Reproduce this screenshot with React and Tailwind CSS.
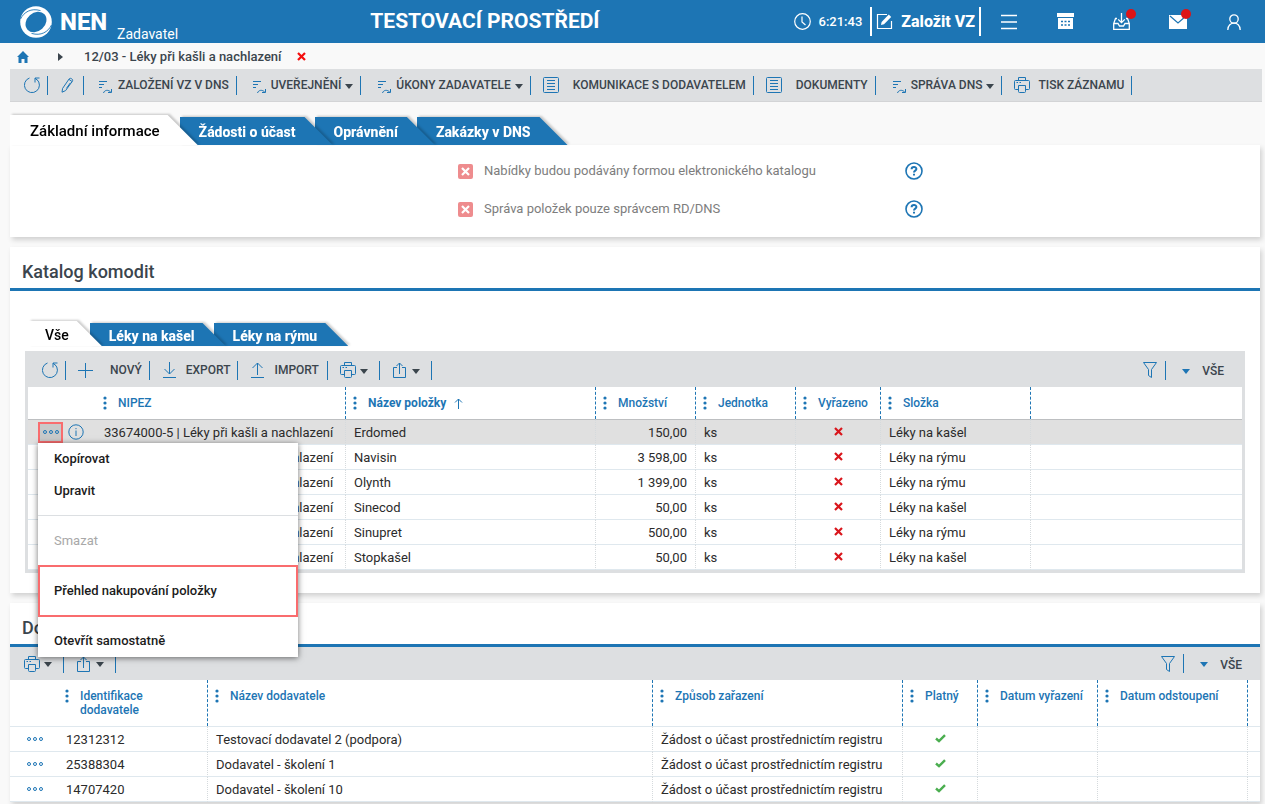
import clsx from "clsx"

const BLUE = "#1d75b4"

const COMMODITIES = [
  { name: "Erdomed", amount: "150,00", folder: "Léky na kašel" },
  { name: "Navisin", amount: "3 598,00", folder: "Léky na rýmu" },
  { name: "Olynth", amount: "1 399,00", folder: "Léky na rýmu" },
  { name: "Sinecod", amount: "50,00", folder: "Léky na kašel" },
  { name: "Sinupret", amount: "500,00", folder: "Léky na rýmu" },
  { name: "Stopkašel", amount: "50,00", folder: "Léky na kašel" },
]

const SUPPLIERS = [
  { id: "12312312", name: "Testovací dodavatel 2 (podpora)" },
  { id: "25388304", name: "Dodavatel - školení 1" },
  { id: "14707420", name: "Dodavatel - školení 10" },
]

/* ---------- icons ---------- */

function Icon({ w = 16, h = 16, color = BLUE, children, className }) {
  return (
    <svg width={w} height={h} viewBox={`0 0 ${w} ${h}`} fill="none" stroke={color} className={clsx("shrink-0", className)} aria-hidden="true">
      {children}
    </svg>
  )
}

const RefreshIcon = () => (
  <Icon>
    <path d="M5.5 1A7.5 7.5 0 1 0 12.8 2.4" />
    <path d="M15.5 1H11V5.5" />
    <path d="M11 1.2 13.2 3" />
  </Icon>
)

const PencilIcon = () => (
  <Icon w={13}>
    <path d="M1 15.2 1.6 11.4 8.2 1.8C9.2 .4 12.6 2.2 11.4 4.2L4.6 13.6Z" />
    <path d="M8 2.4 11.2 4.6M9.4 5.8 5.4 11.4" />
  </Icon>
)

const ProcessIcon = () => (
  <Icon w={15} h={14} className="mt-1">
    <path d="M1 1.5H9M1 4.5H6M1 7.5H4" />
    <path d="M5.5 13C6.5 9.8 10.5 9.4 12.8 12.2M13.5 9V12.5H10" />
  </Icon>
)

const ListIcon = () => (
  <Icon>
    <rect x=".5" y=".5" width="15" height="15" rx="1" />
    <path d="M4 3.5H12M4 6.5H12M4 9.5H12M4 12.5H12" />
  </Icon>
)

const PrinterIcon = () => (
  <Icon>
    <path d="M4.5 3.5V.5H11.5V3.5M4.5 12.5H1.5Q.5 12.5 .5 11.5V4.5Q.5 3.5 1.5 3.5H14.5Q15.5 3.5 15.5 4.5V11.5Q15.5 12.5 14.5 12.5H11.5" />
    <path d="M4.5 8.5H11.5V14.5Q11.5 15.5 10.5 15.5H5.5Q4.5 15.5 4.5 14.5Z" />
    <path d="M2.5 5.5H4M5.5 5.5H7" />
  </Icon>
)

const PlusIcon = () => (
  <Icon w={15}>
    <path d="M7.5 1V16M0 8.5H15" />
  </Icon>
)

const DownloadIcon = () => (
  <Icon w={13}>
    <path d="M6.5 0V12M1.5 7 6.5 12 11.5 7M0 15.5H13" />
  </Icon>
)

const UploadIcon = () => (
  <Icon w={13}>
    <path d="M6.5 13V1M1.5 6 6.5 1 11.5 6M0 15.5H13" />
  </Icon>
)

const ShareIcon = () => (
  <Icon w={13}>
    <path d="M4 5.5H.5V15.5H12.5V5.5H9M6.5 12V1M3.5 4 6.5 1 9.5 4" />
  </Icon>
)

const FilterIcon = () => (
  <Icon w={14}>
    <path d="M.5 .5H13.5L8.5 7.5V15.5L5.5 13.5V7.5Z" />
  </Icon>
)

const Caret = ({ color = "#3b454d" }) => (
  <Icon w={8} h={5} color="none" className="mt-0.5">
    <path d="M0 0H8L4 5Z" fill={color} />
  </Icon>
)

const DotsIcon = () => (
  <Icon w={16} h={4}>
    <circle cx="2" cy="2" r="1.5" />
    <circle cx="8" cy="2" r="1.5" />
    <circle cx="14" cy="2" r="1.5" />
  </Icon>
)

const InfoIcon = () => (
  <Icon>
    <circle cx="8" cy="8" r="7.2" />
    <path d="M8 6.5V12M8 4V5.2" />
  </Icon>
)

const CrossIcon = ({ color = "#d9161c", size = 9 }) => (
  <svg width={size} height={size} viewBox="0 0 9 9" stroke={color} strokeWidth="2.2" aria-hidden="true">
    <path d="M1 1 8 8M8 1 1 8" />
  </svg>
)

const CheckIcon = () => (
  <Icon w={11} h={9} color="#4bae50">
    <path d="M1 4.5 4 7.2 10 1.2" strokeWidth="2.4" />
  </Icon>
)

const HelpIcon = () => (
  <svg width="18" height="18" viewBox="0 0 18 18" fill="none" stroke={BLUE} aria-hidden="true">
    <circle cx="9" cy="9" r="8" strokeWidth="1.6" />
    <path d="M6.6 7.2C6.6 4.2 11.4 4.2 11.4 7C11.4 8.6 9 8.6 9 10.4M9 11.8V13.6" strokeWidth="2" />
  </svg>
)

function Logo() {
  return (
    <svg width="32" height="32" viewBox="0 0 32 32" aria-hidden="true">
      <circle cx="16" cy="16" r="15.8" fill="#fff" />
      <ellipse cx="16" cy="16" rx="11.4" ry="9.2" transform="rotate(-42 16 16)" fill={BLUE} />
      <path d="M.5 13C4 6 11 1.8 20.5 4.6M31.5 19C28 26 21 30.2 11.5 27.4" stroke={BLUE} strokeWidth=".9" fill="none" />
    </svg>
  )
}

/* ---------- shared parts ---------- */

const Separator = () => <span className="h-[19px] w-px shrink-0 bg-[#1d75b4]" />

function ToolButton({ icon, label, title, caret, className }) {
  return (
    <>
      <button type="button" title={title} className={clsx("flex h-5 items-center text-xs font-medium whitespace-nowrap text-[#3b454d]", className)}>
        {icon}
        {label && <span>{label}</span>}
        {caret && <Caret />}
      </button>
      <Separator />
    </>
  )
}

function PrintAndShare() {
  return (
    <>
      <ToolButton icon={<PrinterIcon />} title="Tisk" caret className="gap-1 pr-[11px] pl-3" />
      <ToolButton icon={<ShareIcon />} title="Sdílet" caret className="gap-1.5 pr-[11px] pl-[13px]" />
    </>
  )
}

function FilterGroup() {
  return (
    <div className="ml-auto flex items-center pr-[18px]">
      <button type="button" title="Filtr" className="mr-2"><FilterIcon /></button>
      <Separator />
      <button type="button" className="flex items-center gap-3 pl-4 text-xs font-medium text-[#3b454d]">
        <Caret color={BLUE} />
        <span className="pt-0.5">VŠE</span>
      </button>
    </div>
  )
}

function Tab({ active, small, first, z, children }) {
  return (
    <li className={clsx("drop-shadow-[2px_-1px_1px_rgba(0,0,0,0.2)]", !first && (small ? "-ml-3" : "-ml-[18px]"), z)}>
      <button
        type="button"
        role="tab"
        aria-selected={!!active}
        className={clsx(
          "flex items-center pt-0.5 whitespace-nowrap",
          active && !small && "h-[30px] bg-white pr-[38px] pl-5 text-[15px] font-medium text-black [clip-path:polygon(0_0,calc(100%-30px)_0,100%_100%,0_100%)]",
          active && small && "h-[25px] bg-white pr-[33px] pl-4 text-sm font-medium text-black [clip-path:polygon(0_0,calc(100%-25px)_0,100%_100%,0_100%)]",
          !active && "bg-[#1d75b4] pl-[19px] text-sm font-extrabold text-white",
          !active && !small && "h-7 pr-[37px] [clip-path:polygon(0_0,calc(100%-28px)_0,100%_100%,0_100%)]",
          !active && small && "h-[23px] pr-[31px] [clip-path:polygon(0_0,calc(100%-23px)_0,100%_100%,0_100%)]"
        )}
      >
        {children}
      </button>
    </li>
  )
}

function HeadCell({ children, sorted }) {
  return (
    <th scope="col" className="border-r border-dashed border-[#1d75b4] p-0 align-top font-medium text-[#1d75b4]">
      <div className={clsx("flex items-start pt-[9px] pl-[7px] text-left text-xs leading-[14px]", sorted && "font-bold")}>
        <svg width="4" height="14" viewBox="0 0 4 14" fill={BLUE} className="mr-[11px] shrink-0" aria-hidden="true">
          <circle cx="2" cy="2" r="1.6" />
          <circle cx="2" cy="7" r="1.6" />
          <circle cx="2" cy="12" r="1.6" />
        </svg>
        <span>{children}</span>
        {sorted && (
          <Icon w={9} h={11} className="mt-0.5 ml-2">
            <path d="M4.5 11V1M1 4.5 4.5 1 8 4.5" />
          </Icon>
        )}
      </div>
    </th>
  )
}

function Cell({ children, className }) {
  return (
    <td className={clsx("h-[25px] border-r border-b border-r-[#d5dadd] border-b-[#dfe8ee] px-2 pt-0.5 pb-0 [border-right-style:dotted]", className)}>{children}</td>
  )
}

function Card({ children, className }) {
  return <section className={clsx("bg-white shadow-[2px_3px_5px_rgba(0,0,0,0.16)]", className)}>{children}</section>
}

function CardTitle({ children }) {
  return <h2 className="h-11 border-b-[3px] border-[#1d75b4] pt-[13px] pl-3 text-lg leading-6 font-medium text-[#3b454d]">{children}</h2>
}

/* ---------- page parts ---------- */

function Header() {
  return (
    <header className="flex h-[43px] items-center bg-[#1d75b4] pr-6 pl-5 text-white">
      <Logo />
      <span className="ml-2 w-[53px] text-2xl font-extrabold">NEN</span>
      <span className="mt-6 ml-1 text-sm">Zadavatel</span>
      <h1 className="ml-auto text-[21px] font-bold">TESTOVACÍ PROSTŘEDÍ</h1>
      <div className="ml-[194px] flex shrink-0 items-center">
        <Icon w={17} h={17} color="#fff">
          <circle cx="8.5" cy="8.5" r="7.8" strokeWidth="1.2" />
          <path d="M8 3.5V9L11.5 12" strokeWidth="1.2" />
        </Icon>
        <time className="ml-2 text-[13px] font-medium">6:21:43</time>
        <button type="button" className="ml-2 flex h-[29px] items-center gap-2 border-x-2 border-white px-1 text-base font-extrabold">
          <Icon w={17} h={17} color="#fff">
            <path d="M11 1.5H1.5V15.5H15.5V8" strokeWidth="1.2" />
            <path d="M5 12 5.6 9 12.8 1.5 15.2 3.9 8 11.2Z" fill="#fff" stroke="none" />
          </Icon>
          Založit VZ
        </button>
        <button type="button" title="Menu" className="ml-5">
          <Icon w={16} h={16} color="#fff">
            <path d="M0 1.5H16M0 8H16M0 14.5H16" strokeWidth="1.6" />
          </Icon>
        </button>
        <button type="button" title="Kalendář" className="ml-10">
          <Icon w={17} h={17} color="none">
            <path d="M0 0H17V4H0ZM1 5H16V16H1Z" fill="#fff" />
            <path d="M4 8.5H6M7.5 8.5H9.5M11 8.5H13M4 12H6M7.5 12H9.5M11 12H13" stroke={BLUE} strokeWidth="1.6" />
          </Icon>
        </button>
        <button type="button" title="Stažené" className="relative ml-[39px]">
          <Icon w={17} h={17} color="#fff">
            <path d="M4 5.5H2.5L.7 10.5V16.3H16.3V10.5L14.5 5.5H13M.7 10.5H5L6.5 13H10.5L12 10.5H16.3M8.5 0V9.5M5.2 6.4 8.5 9.6 11.8 6.4" strokeWidth="1.3" />
          </Icon>
          <span className="absolute -top-1 -right-1.5 size-2.5 rounded-full bg-[#dc1418]" />
        </button>
        <button type="button" title="Zprávy" className="relative ml-[39px]">
          <Icon w={18} h={14} color="none">
            <path d="M0 0H18V14H0Z" fill="#fff" />
            <path d="M1 1 9 8 17 1" stroke={BLUE} strokeWidth="1.2" />
          </Icon>
          <span className="absolute -top-1.5 -right-1 size-2.5 rounded-full bg-[#dc1418]" />
        </button>
        <button type="button" title="Uživatel" className="ml-10">
          <Icon w={14} h={16} color="#fff">
            <circle cx="7" cy="5" r="4.2" strokeWidth="1.3" />
            <path d="M.8 16C.8 11 4 9.2 7 9.2S13.2 11 13.2 16" strokeWidth="1.3" />
          </Icon>
        </button>
      </div>
    </header>
  )
}

function Breadcrumb() {
  return (
    <nav aria-label="Navigace" className="flex h-[26px] items-center pt-px pl-[17px] text-[13px] font-medium text-[#3b454d]">
      <a href="#" title="Domů">
        <Icon w={12} h={12} color="none">
          <path d="M6 0 12 6H10.5V12H7.5V8H4.5V12H1.5V6H0Z" fill={BLUE} />
        </Icon>
      </a>
      <Icon w={5} h={8} color="none" className="ml-[29px]">
        <path d="M0 0 5 4 0 8Z" fill="#3b454d" />
      </Icon>
      <a href="#" className="ml-[21px]">12/03 - Léky při kašli a nachlazení</a>
      <button type="button" title="Zavřít" className="ml-[15px]"><CrossIcon color="#f40d0d" /></button>
    </nav>
  )
}

function MainToolbar() {
  return (
    <div className="mr-[3px] ml-2.5 flex h-[33px] items-center border-b border-[#d3d4d6] bg-[#dddfe1]">
      <ToolButton icon={<RefreshIcon />} title="Obnovit" className="pr-[7px] pl-3.5" />
      <ToolButton icon={<PencilIcon />} title="Upravit" className="pr-[9px] pl-[13px]" />
      <ToolButton icon={<ProcessIcon />} label="ZALOŽENÍ VZ V DNS" className="gap-[5px] pr-[7px] pl-3.5" />
      <ToolButton icon={<ProcessIcon />} label="UVEŘEJNĚNÍ" caret className="gap-1 pr-[7px] pl-[15px]" />
      <ToolButton icon={<ProcessIcon />} label="ÚKONY ZADAVATELE" caret className="gap-1 pr-[7px] pl-4" />
      <ToolButton icon={<ListIcon />} label="KOMUNIKACE S DODAVATELEM" className="gap-3.5 pr-[7px] pl-3" />
      <ToolButton icon={<ListIcon />} label="DOKUMENTY" className="gap-3.5 pr-[7px] pl-3" />
      <ToolButton icon={<ProcessIcon />} label="SPRÁVA DNS" caret className="gap-1 pr-[7px] pl-4" />
      <ToolButton icon={<PrinterIcon />} label="TISK ZÁZNAMU" className="gap-2 pr-[7px] pl-3" />
    </div>
  )
}

function FlagRow({ id, label }) {
  return (
    <div className="flex h-[38px] items-center pl-[448px]">
      <label htmlFor={id} className="flex w-[447px] items-center gap-[11px] text-[13px] text-[#7d7d7d]">
        <span className="grid size-[15px] place-items-center">
          <input id={id} type="checkbox" disabled className="col-start-1 row-start-1 size-[15px] appearance-none rounded-xs bg-[#ee8c8e]" />
          <span className="col-start-1 row-start-1"><CrossIcon color="#fff" /></span>
        </span>
        {label}
      </label>
      <button type="button" title="Nápověda"><HelpIcon /></button>
    </div>
  )
}

function RowMenu() {
  const item = "block h-8 w-full px-4 text-left text-[13px] font-medium text-[#1b1b1b]"
  return (
    <div role="menu" className="absolute top-full left-0 z-30 w-[260px] bg-white shadow-[0_1px_6px_rgba(0,0,0,0.55)]">
      <button type="button" role="menuitem" className={item}>Kopírovat</button>
      <button type="button" role="menuitem" className={item}>Upravit</button>
      <div className="mt-2 border-t border-[#dcdfe2] pt-[9px] pb-2">
        <button type="button" role="menuitem" disabled className="block h-8 w-full px-4 text-left text-[13px] text-[#a8a8a8]">Smazat</button>
      </div>
      <div className="border-2 border-[#f96c6e] py-2">
        <button type="button" role="menuitem" className="block h-8 w-full px-3.5 text-left text-[13px] font-medium text-[#1b1b1b]">Přehled nakupování položky</button>
      </div>
      <div className="pt-2"><button type="button" role="menuitem" className={item}>Otevřít samostatně</button></div>
    </div>
  )
}

function CommodityTable() {
  return (
    <table className="w-full table-fixed border-separate border-spacing-0 bg-white text-[13px] text-[#2b2b2b]">
      <colgroup>
        <col className="w-[68px]" />
        <col className="w-[250px]" />
        <col className="w-[250px]" />
        <col className="w-[100px]" />
        <col className="w-[100px]" />
        <col className="w-[85px]" />
        <col className="w-[150px]" />
        <col />
      </colgroup>
      <thead>
        <tr className="h-8">
          <td />
          <HeadCell>NIPEZ</HeadCell>
          <HeadCell sorted>Název položky</HeadCell>
          <HeadCell>Množství</HeadCell>
          <HeadCell>Jednotka</HeadCell>
          <HeadCell>Vyřazeno</HeadCell>
          <HeadCell>Složka</HeadCell>
          <td />
        </tr>
      </thead>
      <tbody className="[&>tr:first-child>td]:h-[26px] [&>tr:first-child>td]:border-t [&>tr:first-child>td]:border-t-[#bdbfc1]">
        {COMMODITIES.map((row, index) => (
          <tr key={row.name} className={index === 0 ? "bg-[#e0e0e0]" : undefined}>
            <td className="border-b border-[#dfe8ee] p-0">
              {index === 0 && (
                <div className="relative ml-2.5 flex items-center gap-[5px]">
                  <button type="button" title="Akce" className="flex h-[21px] w-[25px] items-center justify-center border-2 border-[#f96c6e] bg-[#c9c9c9]"><DotsIcon /></button>
                  <button type="button" title="Detail"><InfoIcon /></button>
                  <RowMenu />
                </div>
              )}
            </td>
            <Cell className="whitespace-nowrap">33674000-5 | Léky při kašli a nachlazení</Cell>
            <Cell>{row.name}</Cell>
            <Cell className="text-right">{row.amount}</Cell>
            <Cell>ks</Cell>
            <Cell><span className="flex justify-center pb-1"><CrossIcon /></span></Cell>
            <Cell>{row.folder}</Cell>
            <td className="border-b border-[#dfe8ee]" />
          </tr>
        ))}
      </tbody>
    </table>
  )
}

function SupplierTable() {
  return (
    <table className="w-full table-fixed border-separate border-spacing-0 text-[13px] text-[#2b2b2b]">
      <colgroup>
        <col className="w-12" />
        <col className="w-[150px]" />
        <col className="w-[445px]" />
        <col className="w-[250px]" />
        <col className="w-[75px]" />
        <col className="w-[120px]" />
        <col className="w-[150px]" />
        <col />
      </colgroup>
      <thead>
        <tr className="h-[46px]">
          <td />
          <HeadCell>Identifikace<br />dodavatele</HeadCell>
          <HeadCell>Název dodavatele</HeadCell>
          <HeadCell>Způsob zařazení</HeadCell>
          <HeadCell>Platný</HeadCell>
          <HeadCell>Datum vyřazení</HeadCell>
          <HeadCell>Datum odstoupení</HeadCell>
          <td />
        </tr>
      </thead>
      <tbody className="[&>tr:first-child>td]:h-[26px] [&>tr:first-child>td]:border-t [&>tr:first-child>td]:border-t-[#dfe8ee]">
        {SUPPLIERS.map((row) => (
          <tr key={row.id}>
            <td className="border-b border-[#dfe8ee] p-0">
              <button type="button" title="Akce" className="ml-[17px] flex items-center"><DotsIcon /></button>
            </td>
            <Cell>{row.id}</Cell>
            <Cell>{row.name}</Cell>
            <Cell>Žádost o účast prostřednictím registru</Cell>
            <Cell><span className="flex justify-center pb-1"><CheckIcon /></span></Cell>
            <Cell />
            <Cell />
            <td className="border-b border-[#dfe8ee]" />
          </tr>
        ))}
      </tbody>
    </table>
  )
}

export default function App() {
  return (
    <div className="min-h-screen bg-[#f9f9f9] font-['Roboto',sans-serif]">
      <Header />
      <Breadcrumb />
      <MainToolbar />

      <main className="mr-[5px] ml-2.5">
        <ul role="tablist" className="flex items-end pt-[13px]">
          <Tab active first z="z-[4]">Základní informace</Tab>
          <Tab z="z-[3]">Žádosti o účast</Tab>
          <Tab z="z-[2]">Oprávnění</Tab>
          <Tab z="z-[1]">Zakázky v DNS</Tab>
        </ul>
        <Card className="pt-[7px] pb-[9px]">
          <FlagRow id="catalogue" label="Nabídky budou podávány formou elektronického katalogu" />
          <FlagRow id="manager" label="Správa položek pouze správcem RD/DNS" />
        </Card>

        <Card className="mt-2.5 pb-5">
          <CardTitle>Katalog komodit</CardTitle>
          <ul role="tablist" className="flex items-end pt-[30px] pl-[19px]">
            <Tab active small first z="z-[3]">Vše</Tab>
            <Tab small z="z-[2]">Léky na kašel</Tab>
            <Tab small z="z-[1]">Léky na rýmu</Tab>
          </ul>
          <div className="mx-[15px] mt-[5px] border-x-[3px] border-b-[3px] border-[#dddfe1]">
            <div className="flex h-9 items-center bg-[#dddfe1] pt-0.5">
              <ToolButton icon={<RefreshIcon />} title="Obnovit" className="pr-[7px] pl-3.5" />
              <ToolButton icon={<PlusIcon />} label="NOVÝ" className="gap-[17px] pr-[7px] pl-3" />
              <ToolButton icon={<DownloadIcon />} label="EXPORT" className="gap-2.5 pr-[7px] pl-[13px]" />
              <ToolButton icon={<UploadIcon />} label="IMPORT" className="gap-2.5 pr-2 pl-[13px]" />
              <PrintAndShare />
              <FilterGroup />
            </div>
            <CommodityTable />
          </div>
        </Card>

        <Card className="mt-2.5">
          <CardTitle>Dodavatelé</CardTitle>
          <div className="flex h-[33px] items-center bg-[#dddfe1] pl-0.5">
            <PrintAndShare />
            <FilterGroup />
          </div>
          <SupplierTable />
        </Card>
      </main>
    </div>
  )
}
